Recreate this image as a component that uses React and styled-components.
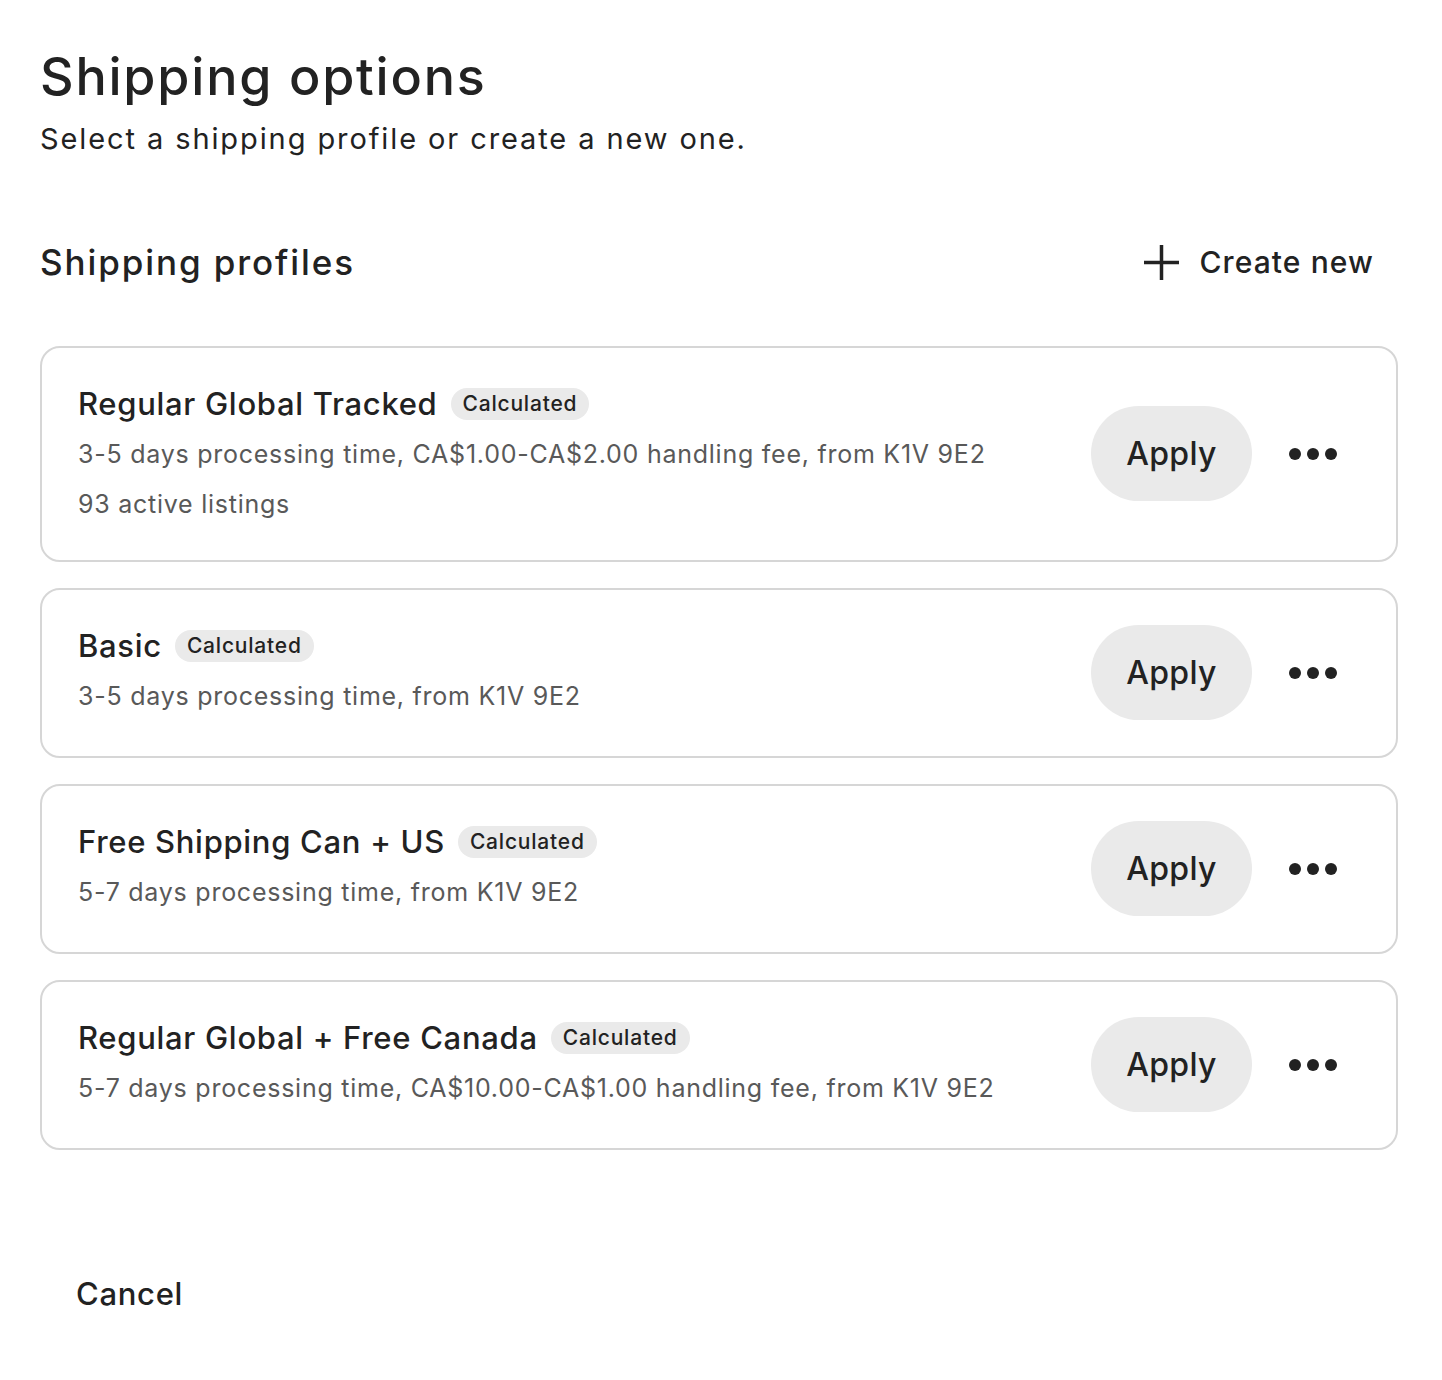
import React from "react";
import styled, { createGlobalStyle } from "styled-components";

const GlobalStyle = createGlobalStyle`
  body {
    margin: 0;
    background: #fff;
    font-family: Inter, "Noto Sans", sans-serif;
    color: #222;
  }
`

const Page = styled.div`
  width: 1358px;
  padding: 47px 44px 60px 40px;
`

const Title = styled.h1`
  margin: 0;
  font-size: 52px;
  line-height: 60px;
  font-weight: 500;
  letter-spacing: 1.8px;
`

const Subtitle = styled.p`
  margin: 12px 0 0;
  font-size: 29px;
  line-height: 40px;
  font-weight: 400;
  letter-spacing: 1.9px;
  color: #222;
`

const HeaderRow = styled.div`
  display: flex;
  align-items: center;
  justify-content: space-between;
  height: 60px;
  margin-top: 73px;
`

const SectionTitle = styled.h2`
  margin: 0;
  font-size: 35px;
  font-weight: 500;
  letter-spacing: 1.9px;
`

const CreateButton = styled.button`
  display: flex;
  align-items: center;
  gap: 19px;
  border: none;
  background: none;
  padding: 0 24px 0 0;
  font-family: inherit;
  font-size: 30px;
  font-weight: 500;
  letter-spacing: 1.1px;
  color: #222;
  cursor: pointer;
`

const List = styled.div`
  display: flex;
  flex-direction: column;
  gap: 26px;
  margin-top: 54px;
`

const Card = styled.div`
  display: flex;
  align-items: flex-start;
  border: 2px solid #d6d6d6;
  border-radius: 20px;
  padding: 30px 59px 31px 36px;
`

const Info = styled.div`
  flex: 1;
  min-width: 0;
`

const NameRow = styled.div`
  display: flex;
  align-items: center;
  gap: 13px;
  height: 51px;
`

const Name = styled.span`
  font-size: 31px;
  font-weight: 500;
  letter-spacing: 0.7px;
`

const Badge = styled.span`
  background: #eaeaea;
  border-radius: 16px;
  padding: 0 12px;
  height: 32px;
  line-height: 32px;
  font-size: 21px;
  font-weight: 500;
  letter-spacing: 0.8px;
  color: #222;
`

const Detail = styled.div`
  font-size: 25px;
  line-height: 50px;
  letter-spacing: 0.75px;
  color: #595959;
`

const Actions = styled.div`
  display: flex;
  align-items: center;
  align-self: center;
  gap: 37px;
  padding: 5px 0;
`

const ApplyButton = styled.button`
  width: 161px;
  height: 95px;
  border: none;
  border-radius: 48px;
  background: #eaeaea;
  font-family: inherit;
  font-size: 32px;
  font-weight: 500;
  letter-spacing: 0.3px;
  color: #222;
  cursor: pointer;
`

const MoreButton = styled.button`
  display: flex;
  align-items: center;
  border: none;
  background: none;
  padding: 0;
  cursor: pointer;
`

const CancelButton = styled.button`
  margin-top: 123px;
  border: none;
  background: none;
  padding: 0 36px;
  height: 40px;
  font-family: inherit;
  font-size: 31px;
  font-weight: 500;
  letter-spacing: 0.7px;
  color: #222;
  cursor: pointer;
`

const PlusIcon = () => (
  <svg width="37" height="37" viewBox="0 0 37 37">
    <path d="M18.5 1v35M1 18.5h35" stroke="#222" strokeWidth="3.5" fill="none" />
  </svg>
)

const DotsIcon = () => (
  <svg width="48" height="14" viewBox="0 0 48 14">
    <circle cx="6" cy="7" r="6" fill="#222" />
    <circle cx="24" cy="7" r="6" fill="#222" />
    <circle cx="42" cy="7" r="6" fill="#222" />
  </svg>
)

const profiles = [
  {
    name: "Regular Global Tracked",
    details: [
      "3-5 days processing time, CA$1.00-CA$2.00 handling fee, from K1V 9E2",
      "93 active listings",
    ],
  },
  { name: "Basic", details: ["3-5 days processing time, from K1V 9E2"] },
  { name: "Free Shipping Can + US", details: ["5-7 days processing time, from K1V 9E2"] },
  {
    name: "Regular Global + Free Canada",
    details: ["5-7 days processing time, CA$10.00-CA$1.00 handling fee, from K1V 9E2"],
  },
]

export default function App() {
  return (
    <Page>
      <GlobalStyle />
      <Title>Shipping options</Title>
      <Subtitle>Select a shipping profile or create a new one.</Subtitle>
      <HeaderRow>
        <SectionTitle>Shipping profiles</SectionTitle>
        <CreateButton>
          <PlusIcon />
          Create new
        </CreateButton>
      </HeaderRow>
      <List>
        {profiles.map((p) => (
          <Card key={p.name}>
            <Info>
              <NameRow>
                <Name>{p.name}</Name>
                <Badge>Calculated</Badge>
              </NameRow>
              {p.details.map((d) => (
                <Detail key={d}>{d}</Detail>
              ))}
            </Info>
            <Actions>
              <ApplyButton>Apply</ApplyButton>
              <MoreButton aria-label="More options">
                <DotsIcon />
              </MoreButton>
            </Actions>
          </Card>
        ))}
      </List>
      <CancelButton>Cancel</CancelButton>
    </Page>
  )
}
